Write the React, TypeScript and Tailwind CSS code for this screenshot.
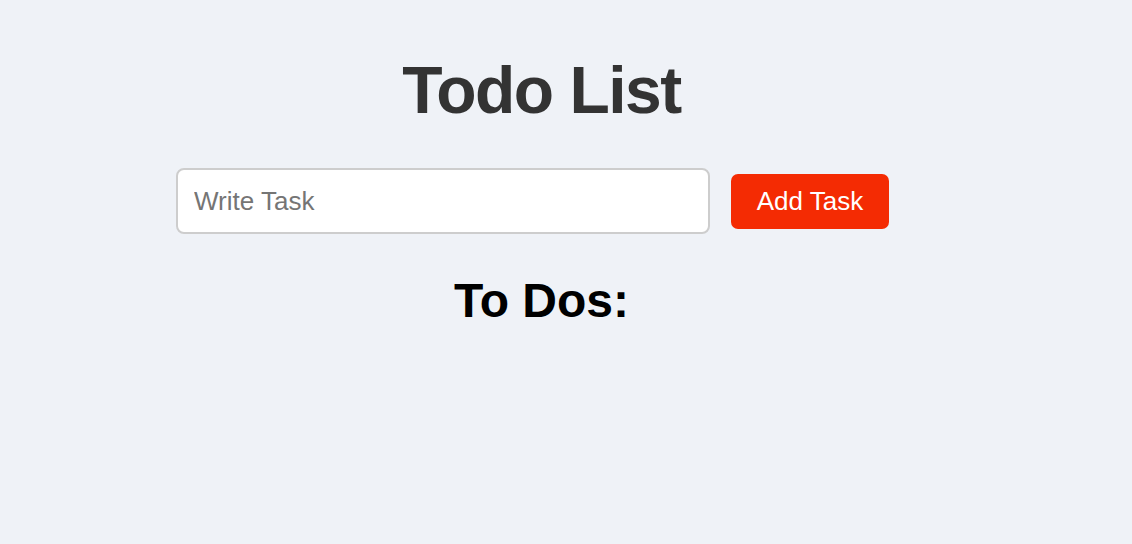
import React from "react";

export default function App() {
  return (
    <div
      className="w-[1132px] h-[544px] bg-[#eff2f7] overflow-hidden"
      style={{ fontFamily: '"Liberation Sans", Arial, sans-serif' }}
    >
      <div className="w-[1083px] pt-[57px] flex flex-col items-center">
        <h1 className="text-[66px] leading-none font-bold text-[#333333] tracking-[-1.5px] h-[66px]">
          Todo List
        </h1>
        <div className="mt-[45px] flex items-center gap-[21px] pr-[18px]">
          <input
            type="text"
            placeholder="Write Task"
            className="w-[534px] h-[66px] bg-white border-2 border-[#cdcdcd] rounded-[8px] pl-[16px] text-[26px] text-[#333] placeholder:text-[#757575] outline-none"
          />
          <button className="w-[158px] h-[55px] bg-[#f42b03] text-white text-[26px] rounded-[7px] leading-none">
            Add Task
          </button>
        </div>
        <h2 className="mt-[43px] text-[48px] leading-none font-bold text-black">
          To Dos:
        </h2>
      </div>
    </div>
  );
}
